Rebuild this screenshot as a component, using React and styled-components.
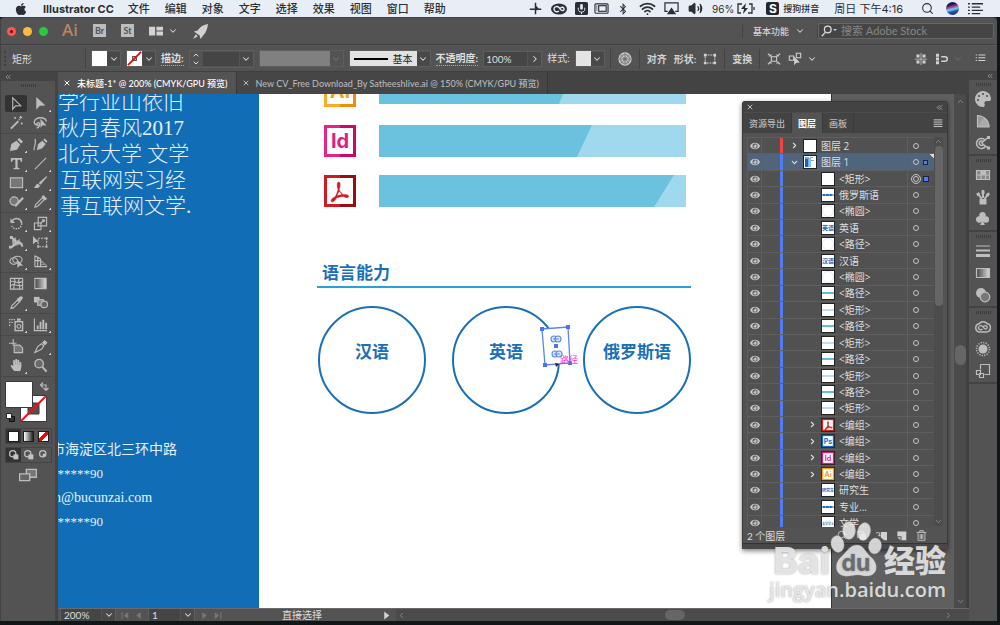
import { useState } from "react";
import styled, { createGlobalStyle } from "styled-components";
import { FaApple, FaBluetoothB, FaEye, FaHandPaper, FaPalette } from "react-icons/fa";
import { BsSuitClubFill } from "react-icons/bs";
import { Airplay, ChevronDown, ChevronRight, ChevronLeft, ChevronUp, ChevronsLeft, Search, Volume2, Wifi, X } from "lucide-react";

const colors = {
    panel: "#535353",
    dark: "#434343",
    line: "#3f3f3f",
    soft: "#5e5e5e",
    icon: "#bdbdbd",
    text: "#dedede",
    blue: "#106db6",
    select: "#4f7df5",
};

const menus = ["文件", "编辑", "对象", "文字", "选择", "效果", "视图", "窗口", "帮助"];

const layers = [
    { name: "图层 2", top: true, open: false, color: "#f24444", thumb: "blank" },
    { name: "图层 1", top: true, open: true, thumb: "page", selected: true },
    { name: "<矩形>", thumb: "blank", targeted: true },
    { name: "俄罗斯语", thumb: "word" },
    { name: "<椭圆>", thumb: "circle" },
    { name: "英语", thumb: "英语" },
    { name: "<路径>", thumb: "circle" },
    { name: "汉语", thumb: "汉语" },
    { name: "<椭圆>", thumb: "circle" },
    { name: "<路径>", thumb: "thick" },
    { name: "<矩形>", thumb: "thin" },
    { name: "<路径>", thumb: "thick" },
    { name: "<矩形>", thumb: "thin" },
    { name: "<路径>", thumb: "thick" },
    { name: "<矩形>", thumb: "thin" },
    { name: "<路径>", thumb: "thick" },
    { name: "<矩形>", thumb: "thin" },
    { name: "<编组>", thumb: "pdf", group: true },
    { name: "<编组>", thumb: "Ps", group: true },
    { name: "<编组>", thumb: "Id", group: true },
    { name: "<编组>", thumb: "Ai", group: true },
    { name: "研究生", thumb: "研究生" },
    { name: "专业...", thumb: "word" },
    { name: "文学...", thumb: "文学学士" },
];

const acrobat = "M8 2.5c1.6 0 1 3 .3 5.2 1 2 2.200 3 3.200 3.500 1.800-.2 3.500.1 3.400 1.200-.2 1.200-2.300.700-3.800-.200-1.500.200-3.200.600-4.500 1.100-1 1.700-2.400 3.200-3.300 2.700-1.200-.900.300-2.500 2.500-3.500.800-1.500 1.500-3.200 1.900-4.700C7 5.500 6.700 2.600 8 2.500z";

const Glyph = ({ size = 16, children, ...rest }) => (
    <svg width={size} height={size} viewBox="0 0 16 16" fill="none" stroke="currentColor" strokeWidth="1.2" aria-hidden="true" {...rest}>
        {children}
    </svg>
);

const solid = { fill: "currentColor", stroke: "none" };

const toolGroups = [
    [
        { label: "选择", active: true, icon: <path d="M4 2v12l3-3.500 5.500-.200z" /> },
        { label: "直接选择", more: true, icon: <path {...solid} d="M3.500 1v13.500l3.800-4.200 6-.300z" /> },
        { label: "魔棒", icon: <><path strokeWidth="2" d="M2 14.500l8-8" /><path d="M12.500 1v3M11 2.500h3M6.500 2v2M5.500 3h2M13.500 8v2M12.500 9h2M10.500 5.500l1-1" /></> },
        { label: "套索", icon: <><path strokeWidth="1.500" d="M6 11c-3.500 0-5-2-4.600-4 .5-2.800 4-4.500 7.600-4 3.500.3 5.500 2 5 4M6 11c-2 0-2.600-2-1-2.600s2.800 1 2 2.600c-.5 1.500-1.500 2.500-3 2.800" /><path {...solid} d="M8 4v9.500l2.400-2.500 4 .2z" /></> },
    ],
    [
        { label: "钢笔", more: true, icon: <path {...solid} d="M1 15l1.500-7.500L8 4l4 4-3.500 5.500zM9 3l2-2 4 4-2 2z" /> },
        { label: "曲率", icon: <><path {...solid} d="M4 14l1.500-6.500L10 4l3.500 3.500L10 12zM11 3l1.500-1.500 3 3L14 6z" /><path d="M2 2c2 4-1 8-1 12" /></> },
        { label: "文字工具", more: true, icon: <path {...solid} d="M2 2h12v4h-1.500L12 4H9.200v8.500l2 .5v1h-6.400v-1l2-.5V4H4l-.5 2H2z" /> },
        { label: "直线段", more: true, icon: <path d="M2 14L14 2" /> },
        { label: "矩形工具", more: true, icon: <rect x="1.500" y="3" width="13" height="10.500" fill="#777" /> },
        { label: "画笔", more: true, icon: <path {...solid} d="M14.500 1L6 8.500l2 2L15 2zM5.300 9.200c-2 0-2 1.800-4.300 4.300 3 1 6 .3 6.300-2.400z" /> },
        { label: "Shaper", more: true, icon: <><circle cx="5.500" cy="7.500" r="4.500" fill="#777" /><path strokeWidth="2.400" d="M6.500 13L15 4" /></> },
        { label: "铅笔", more: true, icon: <><path d="M2 14l1-3 7-7 2 2-7 7z" /><path {...solid} d="M9 3l2-2 4 4-2 2z" /></> },
    ],
    [
        { label: "旋转", more: true, icon: <><path strokeWidth="1.600" d="M3.500 5A5.500 5.500 0 0 1 13.500 8" /><path strokeWidth="1.600" strokeDasharray="1.500 1.200" d="M13.500 8A5.500 5.500 0 0 1 3 10.500" /><path {...solid} d="M1.500 2.500v5h5z" /></> },
        { label: "比例缩放", more: true, icon: <><path d="M5.500 1.500h9v9h-9zM1.500 7.500h7v7h-7z" /><path d="M8 8l4-4M9.500 4H12v2.500" /></> },
        { label: "宽度", more: true, icon: <><path strokeWidth="2.200" d="M1.500 2.500c3 0 3.500 3 6 4.500M1 13c4 0 5-4 8-5s4 1 5.500 4.500" /><path {...solid} d="M3 6l4-4 1 4 4-2-1 4 4 1-6 2-5 1z" opacity=".75" /><path {...solid} d="M1 1h3v3H1zM0 11.500h3v3H0z" /></> },
        { label: "自由变换", icon: <><path strokeDasharray="2 1" d="M5.500 3.500h9v9h-9z" /><path {...solid} d="M0 1v9l2.500-2.500H6zM13.500 2.500h2v2h-2zM13.500 11.500h2v2h-2zM4.500 11.500h2v2h-2z" /></> },
        { label: "形状生成器", more: true, icon: <><ellipse cx="5" cy="7.500" rx="4" ry="3.500" /><ellipse cx="9" cy="6" rx="5" ry="3.600" /><path {...solid} d="M9 6v9l2.300-2.400 3.700-.2z" /></> },
        { label: "透视网格", more: true, icon: <><path d="M2 1.500v12M5 3v10M8 5v8M2 2l6 3M2 7h6M2 13.500h13" /><path opacity=".6" d="M8 6.500l7 6.500M8 9h3M8 11h6" /></> },
    ],
    [
        { label: "网格", icon: <><path d="M1.500 2.500h13v11.500h-13z" /><path d="M2 6c3-2 5 3 12 0M2 10c4-3 6 2 12 0M5.500 3c3 3-2 7 0 11M11 3c-3 3 2 7 0 11" /></> },
        { label: "渐变工具", icon: <><defs><linearGradient id="toolGrad"><stop stopColor="#444" /><stop offset="1" stopColor="#ddd" /></linearGradient></defs><path fill="url(#toolGrad)" d="M2 2.500h12v11H2z" /></> },
        { label: "吸管", more: true, icon: <><path d="M2 14.500l1-3 6-6 2 2-6 6z" /><path {...solid} d="M8 4l1.500-.5L12 1.500c1.500-1 3.500 1 2.500 2.500l-2 2.500-.5 1.500z" /></> },
        { label: "混合", icon: <><path {...solid} d="M1 2h6v6H1z" /><rect x="5" y="5" width="6" height="6" fill="#888" /><circle cx="12" cy="10" r="3.500" fill="#666" /></> },
    ],
    [
        { label: "符号喷枪", more: true, icon: <><path {...solid} d="M0 2h1.500v1.500H0zM2.500 2H4v1.500H2.500zM5 2h1.500v1.500H5zM0 5h1.500v1.500H0zM2.500 5H4v1.500H2.500zM0 8h1.500v1.500H0zM8.500 1.500h4V4h-4z" /><rect x="6.500" y="5" width="8" height="9.500" strokeWidth="1.500" /><circle cx="10.500" cy="10" r="2" /></> },
        { label: "柱形图", more: true, icon: <><path d="M1.500 1.500v13H15" /><path {...solid} d="M4 9h2v4H4zM7 5h2v8H7zM10 3h2v10h-2zM13 6h2v7h-2z" /></> },
    ],
    [
        { label: "画板工具", icon: <><path d="M4.500 0v7M0 4.500h8" /><path fill="#777" d="M5.500 6.500h6l3 3v5h-9z" /></> },
        { label: "切片", more: true, icon: <><path d="M2 14.500L5 8l4-3 2.500 2.500L9 11z" /><path {...solid} d="M9.500 4l3-3 3 3-3 3z" /></> },
        { label: "抓手", more: true, icon: <FaHandPaper size="13" x="1" y="1" /> },
        { label: "缩放", icon: <><circle cx="6.500" cy="6" r="4.500" fill="#6a6a6a" strokeWidth="1.500" /><path strokeWidth="2.200" d="M10 9.500l4.500 5" /></> },
    ],
];

const dockGroups = [
    [
        { label: "颜色", icon: <FaPalette size="16" /> },
        { label: "颜色参考", icon: <><path fill="#999" d="M2.500 14V2.500C9 2.500 14 8 14 14z" /><path {...solid} d="M2.500 14L9 4l5 10z" opacity=".5" /></> },
        { label: "颜色主题", icon: <><path strokeWidth="1.500" d="M10.500 11.500a5 5 0 1 1-1-7M8.500 9.500a2.300 2.300 0 1 1-1-3.500M6.500 8l6.500-5.500M6.500 8l6.500 5" /><path {...solid} d="M12 1h3v3h-3zM12 11.500h3v3h-3z" /></> },
    ],
    [
        { label: "色板", icon: <><path fill="#888" d="M1.500 3.500h13v9h-13z" /><path d="M1.500 8h13M6 3.500v9M10.500 3.500v9" /><path {...solid} d="M6 3.500h4.500V8H6z" /></> },
        { label: "画笔面板", icon: <><path {...solid} d="M4.500 10h7v5.500h-7z" /><path strokeWidth="2" d="M6.500 10L3 4M8 9V1M9.500 10L14 4" /><path strokeWidth="3" d="M2.500 4l1.300 2.500M8 1.500V5M13.500 4.500L12 7" /></> },
        { label: "符号", icon: <BsSuitClubFill size="15" /> },
    ],
    [
        { label: "描边面板", icon: <path {...solid} d="M1 2.500h14v1H1zM1 6.500h14v2H1zM1 11h14v3H1z" /> },
        { label: "渐变", icon: <path fill="url(#toolGrad)" d="M1.500 3.500h13v9h-13z" /> },
        { label: "透明度", icon: <><circle cx="6" cy="6" r="5" {...solid} /><circle cx="10" cy="10" r="4.800" fill="#777" /></> },
    ],
    [
        { label: "库", icon: <><path strokeWidth="1.500" d="M4.500 13a4.200 4.200 0 0 1-.3-8.300A5 5 0 0 1 12 4.500 4.300 4.300 0 0 1 11.500 13z" /><path strokeWidth="1.300" d="M7.500 10c-1.500 1.500-4 .8-4-1.200s2.500-3 4-1.500L9.500 9.500c1.500 1.200 3 0 2.500-1.700s-2.800-1.500-4 .2" /></> },
        { label: "外观", icon: <><circle cx="8" cy="8" r="4.500" {...solid} /><circle cx="8" cy="8" r="6.500" strokeDasharray="1.200 1.300" strokeWidth="1.500" /></> },
        { label: "资源", icon: <><path d="M5.500 1.500h9v10h-5M5.500 1.500v5" /><path d="M1.500 7.500h4v4h-4zM4.500 10.500h4v4h-4z" /></> },
    ],
];

const Thumb = ({ kind }) => {
    const apps = { pdf: "#d22027", Ps: "#0b6fbd", Id: "#e31a82", Ai: "#f5a11c" };

    return (
        <ThumbBox viewBox="0 0 14 14" aria-hidden="true">
            <rect x=".5" y=".5" width="13" height="13" fill="#fff" stroke="#222" />
            {kind === "page" && <><path d="M2 2h4v10H2zM7 2h3v1H7zM7 5h4v1H7z" fill="#69aede" /><path d="M2 4h3v8H2z" fill="#1c64ad" /><path d="M6 3h2v9H6z" fill="#8cc4e6" /></>}
            {kind === "circle" && <circle cx="7" cy="7" r="5.500" fill="none" stroke="#c8ddef" strokeWidth=".6" />}
            {kind === "word" && <path d="M1.500 7h11" stroke="#1a70b7" strokeWidth="2" strokeDasharray="3 .4" />}
            {kind === "thick" && <path d="M1 7h12" stroke="#5fc0dc" strokeWidth="2" />}
            {kind === "thin" && <path d="M1 7h12" stroke="#a3d7ec" strokeWidth="1.500" />}
            {apps[kind] && <rect x="1.500" y="1.500" width="11" height="11" fill="#fff" stroke={apps[kind]} strokeWidth="1.300" />}
            {kind === "pdf" && <path d={acrobat} fill={apps.pdf} stroke={apps.pdf} transform="translate(2 2) scale(.62)" />}
            {["Ps", "Id", "Ai"].includes(kind) && <text x="7" y="9.800" textAnchor="middle" fontSize="7" fontWeight="700" fill={apps[kind]}>{kind}</text>}
            {["英语", "汉语"].includes(kind) && <text x="7" y="9.300" textAnchor="middle" fontSize="6" fontWeight="700" fill="#1a70b7">{kind}</text>}
            {["研究生", "文学学士"].includes(kind) && <text x="7" y="8.500" textAnchor="middle" fontSize={12 / kind.length} fontWeight="700" fill="#1a70b7">{kind}</text>}
        </ThumbBox>
    );
};

const Tool = ({ tool }) => (
    <ToolButton $active={tool.active} aria-label={tool.label}>
        <Glyph size={15}>{tool.icon}</Glyph>
        {tool.more && <Corner />}
    </ToolButton>
);

const Drop = ({ label, disabled }) => (
    <DropButton aria-label={label} disabled={disabled}><ChevronDown size={10} strokeWidth={2.5} /></DropButton>
);

const MacMenu = () => (
    <MenuBar>
        <AppleButton aria-label="Apple"><FaApple size={14} /></AppleButton>
        <MenuButton $strong>Illustrator CC</MenuButton>
        <MenuList>
            {menus.map((item) => <MenuButton key={item}>{item}</MenuButton>)}
        </MenuList>
        <MenuStatus>
            <StatusCell $w={24}><Glyph size={13} strokeWidth="1.800"><path d="M8 1v14M1 9h6M10 9h5" /><path {...solid} d="M8 4l4 4-4 3z" /></Glyph></StatusCell>
            <StatusCell $w={24}>
                <Glyph size={16}><ellipse cx="8" cy="8" rx="8" ry="5.500" {...solid} /><path stroke="#e8eef6" strokeWidth="1.400" d="M8 10c-2 1.500-5 .8-5-2s3.500-3 5-1.500l2 2.500c2 1.500 3.500 0 3-1.500s-2.500-1.500-3.500-.5" /></Glyph>
            </StatusCell>
            <StatusCell $w={20}>
                <Glyph size={13}><rect width="16" height="16" rx="2" {...solid} /><path stroke="#dfe6ee" d="M4 7v2c0 2 1.500 3.500 4 3.500s4-1.500 4-3.500V7M8 12.500V15" /><rect x="6.300" y="2.500" width="3.400" height="7" rx="1.700" fill="#dfe6ee" stroke="none" /></Glyph>
            </StatusCell>
            <StatusCell $w={20}><Glyph size={15}><rect x="1" y="3" width="14" height="10" rx="1" /><rect x="5" y="5" width="8" height="6" /><path d="M3 5v6" strokeDasharray="1 1" /></Glyph></StatusCell>
            <StatusCell $w={24}><FaBluetoothB size={12} /></StatusCell>
            <StatusCell $w={24}><Wifi size={17} strokeWidth={2.500} /></StatusCell>
            <StatusCell $w={24}>
                <Glyph size={15} strokeWidth="1.300"><path d="M4 11H1V2h14v9h-3" /><path {...solid} d="M8 7l5 7H3z" /></Glyph>
            </StatusCell>
            <StatusCell $w={24}><Volume2 size={15} strokeWidth={2} fill="currentColor" /></StatusCell>
            <Battery>
                96%
                <svg width="18" height="11" viewBox="0 0 18 11" fill="none" stroke="currentColor" aria-hidden="true">
                    <path d="M5 1H1v9h3M12 1h3v9h-4M17 4v3" strokeWidth="1.300" />
                    <path d="M9 0L4 6h3l-1 5 5-6H8z" fill="currentColor" stroke="none" />
                </svg>
            </Battery>
            <Sogou><SogouMark>S</SogouMark>搜狗拼音</Sogou>
            <Clock>周日 下午4:16</Clock>
            <StatusCell $w={24}><Search size={13} strokeWidth={2} /></StatusCell>
            <StatusCell $w={26}><Siri /></StatusCell>
            <StatusCell $w={20}><Glyph size={15} strokeWidth="1.500"><path d="M0 3h2M4 3h12M0 6.500h2M4 6.500h9M0 10h2M4 10h12M0 13.500h2M4 13.500h9" /></Glyph></StatusCell>
        </MenuStatus>
    </MenuBar>
);

const AppHeader = () => (
    <AppBar>
        <Lights>
            <Light $color="#fc5753" aria-label="关闭"><i /></Light>
            <Light $color="#fdbc40" aria-label="最小化" />
            <Light $color="#28c840" aria-label="缩放窗口" />
        </Lights>
        <Brand>Ai</Brand>
        <AppLinks>
            <SquareButton>Br</SquareButton>
            <SquareButton>St</SquareButton>
            <PlainButton aria-label="排列文档">
                <Glyph size={14} {...solid}><path d="M0 3h7v10H0zM8.500 3H16v4.300H8.500zM8.500 8.500H16V13H8.500z" /></Glyph>
                <ChevronDown size={10} strokeWidth={2.500} />
            </PlainButton>
            <PlainButton aria-label="GPU 性能"><Glyph size={15} {...solid}><path d="M16 0C10 1 7 4 5 7L1 8l3 2 1 1 2 1 1 4 3-4c3-3 4.500-7 5-12zM3 11l-3 5 5-3z" /></Glyph></PlainButton>
        </AppLinks>
        <Workspace>
            <PlainButton>基本功能 <ChevronDown size={10} strokeWidth={2.500} /></PlainButton>
        </Workspace>
        <StockSearch>
            <Glyph size={12} strokeWidth="1.700"><circle cx="9" cy="6" r="4.500" /><path d="M6 9.500L1 15" /></Glyph>
            <Caret />
            <input type="search" aria-label="搜索 Adobe Stock" placeholder="搜索 Adobe Stock" />
        </StockSearch>
    </AppBar>
);

const ControlBar = () => {
    const [opacity, setOpacity] = useState("100%");
    const [weight, setWeight] = useState("");

    return (
        <Controls>
            <ControlGroup $gap={5}>
                <ObjectName>矩形</ObjectName>
                <Divider />
                <Combo><Swatch /><Drop label="填色" /></Combo>
                <Combo>
                    <Swatch><Glyph size={15}><path stroke="#555" d="M6 6h4v4H6z" /><path stroke="#f00" strokeWidth="2" d="M1 15L15 1" /></Glyph></Swatch>
                    <Drop label="描边颜色" />
                </Combo>
                <Caption htmlFor="weight" $strong $line>描边:</Caption>
                <Combo>
                    <Stepper><ChevronUp size={8} strokeWidth={3} /><ChevronDown size={8} strokeWidth={3} /></Stepper>
                    <Field id="weight" $w={37} value={weight} onChange={(e) => setWeight(e.target.value)} />
                    <Drop label="粗细" />
                </Combo>
                <Combo><Profile /><Drop label="变量宽度" disabled /></Combo>
                <Combo><BrushBox><span />基本</BrushBox><Drop label="画笔定义" /></Combo>
                <Caption htmlFor="opacity" $strong $line>不透明度:</Caption>
                <Combo>
                    <Field id="opacity" $w={44} value={opacity} onChange={(e) => setOpacity(e.target.value)} />
                    <DropButton aria-label="不透明度滑块"><ChevronRight size={10} strokeWidth={2.500} /></DropButton>
                </Combo>
                <Caption as="span">样式:</Caption>
                <Combo><Swatch $color="#e4e4e4" /><Drop label="图形样式" /></Combo>
            </ControlGroup>
            <ControlGroup $gap={7}>
                <Divider />
                <PlainButton aria-label="重新着色">
                    <Glyph size={14}><circle cx="8" cy="8" r="7" fill="#999" /><circle cx="8" cy="8" r="3.500" /><path d="M8 1v14M1 8h14M3 3l10 10M3 13L13 3" strokeWidth=".7" stroke="#666" /></Glyph>
                </PlainButton>
                <Divider />
                <PlainButton $strong>对齐</PlainButton>
                <PlainButton $strong>形状:</PlainButton>
                <PlainButton aria-label="形状属性"><Glyph size={14}><path d="M2.500 3.500h11v9h-11z" strokeDasharray="2 1" /><path {...solid} d="M1 2h3v3H1zM12 2h3v3h-3zM1 11h3v3H1zM12 11h3v3h-3z" /></Glyph></PlainButton>
                <Divider />
                <PlainButton $strong>变换</PlainButton>
                <Divider />
                <PlainButton aria-label="隔离"><Glyph size={14}><path d="M5 5.500h6v5H5zM1 2l3 2.500M15 2l-3 2.500M1 14l3-2.500M15 14l-3-2.500" /><path {...solid} d="M2 5l3-3v3zM11 2l3 3h-3zM2 11h3v3zM11 11h3l-3 3z" /></Glyph></PlainButton>
                <PlainButton aria-label="选择类似对象">
                    <Glyph size={14}><path d="M1.500 4.500h5v5h-5zM9.500 1.500h5v5h-5z" /><path {...solid} d="M7 5v10l2.500-2.800 4-.2z" /></Glyph>
                    <ChevronDown size={10} strokeWidth={2.500} />
                </PlainButton>
            </ControlGroup>
            <ControlEnd>
                <PlainButton aria-label="对齐像素"><Glyph size={12} {...solid}><path d="M2 2h4v4H2zM10 2h4v4h-4zM2 10h4v4H2zM10 10h4v4h-4zM7.500 0h1v16h-1zM0 7.500h16v1H0z" /></Glyph></PlainButton>
                <PlainButton aria-label="停放"><Glyph size={12}><path {...solid} d="M0 1h4v4H0zM0 6h4v4H0zM0 11h4v4H0z" /><path strokeWidth="2" d="M7 5h5c4 0 4 6 0 6H7" /></Glyph><Faded><ChevronDown size={10} /></Faded></PlainButton>
                <PlainButton aria-label="面板选项"><Glyph size={11}><path d="M1 3h2M5 3h10M1 7h2M5 7h10M1 11h2M5 11h10" strokeWidth="1.500" /></Glyph></PlainButton>
            </ControlEnd>
        </Controls>
    );
};

const Toolbox = () => (
    <ToolColumn>
        <PanelTop><ChevronsLeft size={8} /></PanelTop>
        <Grip />
        <ToolGroups>
            {toolGroups.map((group, index) => (
                <ToolGroup key={index}>
                    {group.map((tool) => <Tool key={tool.label} tool={tool} />)}
                </ToolGroup>
            ))}
        </ToolGroups>
        <FillStroke width="46" height="46" viewBox="0 0 46 46" aria-label="填色和描边">
            <path d="M16.500 16.500h26v26h-26z" fill="#fff" stroke="#3a3a3a" />
            <path d="M24 24h11v11H24z" fill="#535353" stroke="#3a3a3a" />
            <path d="M17 42L42 17" stroke="#e8141c" strokeWidth="2" />
            <path d="M1.500 2.500h27v26h-27z" fill="#fff" stroke="#3a3a3a" />
            <path d="M37 6h5v5M39 3.500L36.500 6 39 8.500M39.500 9l2.500 2.500L44.500 9" fill="none" stroke="#bbb" strokeWidth="1.200" />
            <path d="M5.500 37.500h5v5h-5z" fill="#333" stroke="#111" /><path d="M2.500 34.500h5v5h-5z" fill="#fff" stroke="#222" />
        </FillStroke>
        <ModeRow>
            <ModeButton $active aria-label="颜色模式"><Chip $bg="#fff" /></ModeButton>
            <ModeButton aria-label="渐变模式"><Chip $bg="linear-gradient(90deg, #fff, #222)" /></ModeButton>
            <ModeButton aria-label="无"><Chip $bg="linear-gradient(135deg, #fff 36%, #f00 37%, #f00 63%, #fff 64%)" /></ModeButton>
        </ModeRow>
        <ModeRow>
            {["正常绘图", "背面绘图", "内部绘图"].map((label, index) => (
                <ModeButton key={label} $active={index === 0} aria-label={label}>
                    <Glyph size={10}><circle cx="6" cy="6" r="5" strokeWidth="2" /><path {...solid} d={index === 2 ? "M6 6h4v4H6z" : "M7 7h8v8H7z"} /></Glyph>
                </ModeButton>
            ))}
        </ModeRow>
        <ScreenMode aria-label="更改屏幕模式"><Glyph size={18}><path fill="#777" d="M6.500 3h9v7h-9z" /><path fill="#666" d="M.5 7h9v6h-9z" /></Glyph></ScreenMode>
    </ToolColumn>
);

const SkillIcon = ({ from, to, children }) => (
    <svg width="32" height="32" viewBox="0 0 32 32" aria-hidden="true">
        <path d="M0 0h16v32H0z" fill={from} /><path d="M16 0h16v32H16z" fill={to} />
        <path d="M3 3h26v26H3z" fill="#fff" />
        {children}
    </svg>
);

const Artwork = () => (
    <Artboard>
        <Sidebar>
            <Intro>
                <p>学行业山依旧</p>
                <p>秋月春风2017</p>
                <p>北京大学 文学</p>
                <p>互联网实习经</p>
                <p>事互联网文学.</p>
            </Intro>
            <Contact>
                <p>市海淀区北三环中路</p>
                <p>******90</p>
                <p>n@bucunzai.com</p>
                <p>******90</p>
            </Contact>
        </Sidebar>
        <Resume>
            <Skill $cut>
                <SkillIcon from="#f9ac29" to="#f08c0a"><text x="16" y="23" textAnchor="middle" fontSize="20" fontWeight="700" fill="#f5a11c">Ai</text></SkillIcon>
                <SkillBar viewBox="0 0 307 10"><path d="M0 0h307v10H0z" fill="#a0d9ee" /><path d="M0 0h184l-4 10H0z" fill="#6bc2df" /></SkillBar>
            </Skill>
            <Skill>
                <SkillIcon from="#e9228a" to="#cc0867"><text x="16" y="23" textAnchor="middle" fontSize="20" fontWeight="700" fill="#e01b84">Id</text></SkillIcon>
                <SkillBar viewBox="0 0 307 32"><path d="M0 0h307v32H0z" fill="#a0d9ee" /><path d="M0 0h213l-15 32H0z" fill="#6bc2df" /></SkillBar>
            </Skill>
            <Skill>
                <SkillIcon from="#cf1c22" to="#951015"><path d={acrobat} fill="#d31b21" stroke="#d31b21" strokeWidth=".5" transform="translate(3 3.500) scale(1.450)" /><path d="M15.200 16.500l-2 4 4.500-1.200z" fill="#fff" /></SkillIcon>
                <SkillBar viewBox="0 0 307 32"><path d="M0 0h307v32H0z" fill="#a0d9ee" /><path d="M0 0h295l-20 32H0z" fill="#6bc2df" /></SkillBar>
            </Skill>
            <SectionTitle>语言能力</SectionTitle>
            <Languages>
                <Language>汉语</Language>
                <Language>
                    英语
                    <Selection width="48" height="48" viewBox="0 0 48 48" aria-hidden="true">
                        <path d="M6 7l26-2 2 36-25 2z" fill="#fff" stroke="#5a86f2" strokeWidth="1.300" />
                        <path d="M4 5h4v4H4zM30 3h4v4h-4zM7 41h4v4H7zM32 39h4v4h-4zM18 22h4v4h-4z" fill="#4f6ff5" />
                        <g fill="#dfe8ff" stroke="#5a86f2" strokeWidth="1.100"><circle cx="18" cy="17" r="3" /><circle cx="22" cy="17" r="3" /><circle cx="19" cy="32" r="3" /><circle cx="23" cy="32" r="3" /></g>
                        <path d="M17 17h6M18 32h6" stroke="#5a86f2" />
                        <path d="M19 41l4 1-3 3z" fill="#222" />
                        <text x="24" y="41" fontSize="9" fontWeight="400" fill="#ff3ae0">路径</text>
                    </Selection>
                </Language>
                <Language>俄罗斯语</Language>
            </Languages>
        </Resume>
    </Artboard>
);

const LayersPanel = () => {
    const [selected, setSelected] = useState("图层 1");

    return (
        <Floating>
            <FloatHead><X size={8} strokeWidth={3} /><ChevronsLeft size={9} /></FloatHead>
            <PanelTabs>
                <PanelTab>资源导出</PanelTab>
                <PanelTab $active>图层</PanelTab>
                <PanelTab>画板</PanelTab>
                <PlainButton aria-label="面板菜单"><Glyph size={10} strokeWidth="1.500"><path d="M1 3h14M1 6.500h14M1 10h14M1 13.500h14" /></Glyph></PlainButton>
            </PanelTabs>
            <LayerArea>
                <LayerList>
                    {layers.map((layer, index) => (
                        <LayerRow key={index} $selected={layer.name === selected} onClick={() => layer.top && setSelected(layer.name)}>
                            <EyeButton aria-label="切换可视性"><FaEye size={10} /></EyeButton>
                            <LockCell />
                            <ColorCell $color={layer.color} />
                            <NameCell $top={layer.top}>
                                <Twist $top={layer.top}>{layer.open ? <ChevronDown size={9} strokeWidth={3} /> : (layer.top || layer.group) && <ChevronRight size={9} strokeWidth={3} />}</Twist>
                                <Thumb kind={layer.thumb} />
                                <span>{layer.name}</span>
                            </NameCell>
                            <TargetCell>
                                <Target $on={layer.targeted} />
                                {(layer.targeted || layer.selected) && <Marker $small={layer.selected} />}
                                {layer.selected && <Fold />}
                            </TargetCell>
                        </LayerRow>
                    ))}
                </LayerList>
                <ListScroll>
                    <ChevronUp size={9} />
                    <ListThumb />
                    <ChevronDown size={9} />
                </ListScroll>
            </LayerArea>
            <LayerFoot>
                <span>2 个图层</span>
                <FootIcons>
                    <PlainButton aria-label="定位对象"><Search size={10} /></PlainButton>
                    <PlainButton aria-label="剪切蒙版"><Glyph size={11}><path d="M2 2h9v9H2z" /><path d="M6 6h8v8H6z" fill="#bbb" /></Glyph></PlainButton>
                    <PlainButton aria-label="新建子图层"><Glyph size={11}><path d="M0 4h5v5M3 7l2 2 2-2" /><path {...solid} d="M7 3h9v12h-4l-5-4z" /></Glyph></PlainButton>
                    <PlainButton aria-label="新建图层"><Glyph size={11}><path {...solid} d="M2 2h13v13H8V9H2z" /><path {...solid} d="M2 10.500h4.500V15z" /></Glyph></PlainButton>
                    <PlainButton aria-label="删除"><Glyph size={11}><path d="M1 3.500h14M5.500 3V1h5v2M3 4v11h10V4M6 6v7M8 6v7M10 6v7" /></Glyph></PlainButton>
                </FootIcons>
            </LayerFoot>
        </Floating>
    );
};

const Watermark = () => (
    <Mark>
        <MarkRow>
            <MarkWord>Bai</MarkWord>
            <svg width="54" height="56" viewBox="0 0 54 56" aria-hidden="true">
                <g fill="#f2f2f2" fillOpacity=".82" stroke="#9a9a9a" strokeOpacity=".35">
                    <ellipse cx="7.500" cy="23" rx="6.500" ry="8.500" transform="rotate(-12 7.500 23)" />
                    <ellipse cx="19" cy="9.500" rx="6.500" ry="9" />
                    <ellipse cx="34" cy="10.500" rx="6.500" ry="9" transform="rotate(14 34 10.500)" />
                    <ellipse cx="45" cy="25" rx="6.500" ry="8" transform="rotate(12 45 25)" />
                    <path d="M27 24c7 0 8 7 14 12 8 7 7 18-3 19-5 .5-6-1-11-1s-8 2-13 1c-9-1.500-10-12-4-18 6-5 9-13 17-13z" />
                </g>
                <text x="26" y="50" textAnchor="middle" fontSize="23" fontWeight="700" fill="#6c6c6c">du</text>
            </svg>
            <MarkWord $cjk>经验</MarkWord>
        </MarkRow>
        <MarkUrl>jingyan.baidu.com</MarkUrl>
    </Mark>
);

const App = () => (
    <Desktop>
        <GlobalStyle />
        <MacMenu />
        <Window>
            <AppHeader />
            <ControlBar />
            <Body>
                <Toolbox />
                <Center>
                    <Tabs>
                        <Tab $active><X size={8} strokeWidth={3} />未标题-1* @ 200% (CMYK/GPU 预览)</Tab>
                        <Tab><X size={8} strokeWidth={3} />New CV_Free Download_By Satheeshlive.ai @ 150% (CMYK/GPU 预览)</Tab>
                    </Tabs>
                    <Workarea>
                        <Artwork />
                        <Pasteboard />
                        <SideScroll><ChevronUp size={9} /><SideThumb /><ChevronDown size={9} /></SideScroll>
                        <LayersPanel />
                        <Watermark />
                    </Workarea>
                    <StatusBar>
                        <Combo><StatusField $w={41} aria-label="缩放级别" defaultValue="200%" /><Drop label="缩放列表" /></Combo>
                        <Pager>
                            <button aria-label="首项"><Glyph size={9} {...solid}><path d="M1 2h2v12H1zM13 2v12L5 8z" /></Glyph></button>
                            <button aria-label="上一项"><Glyph size={9} {...solid}><path d="M12 2v12L4 8z" /></Glyph></button>
                        </Pager>
                        <Combo><StatusField $w={32} aria-label="画板导航" defaultValue="1" /><Drop label="画板列表" /></Combo>
                        <Pager>
                            <button aria-label="下一项"><Glyph size={9} {...solid}><path d="M4 2v12l8-6z" /></Glyph></button>
                            <button aria-label="末项"><Glyph size={9} {...solid}><path d="M13 2h2v12h-2zM3 2v12l8-6z" /></Glyph></button>
                        </Pager>
                        <StatusText>直接选择</StatusText>
                        <PlainButton aria-label="显示"><Glyph size={9} {...solid}><path d="M4 1v14l9-7z" /></Glyph></PlainButton>
                        <BottomScroll><ChevronLeft size={9} /><BottomThumb /><ChevronRight size={9} /></BottomScroll>
                    </StatusBar>
                </Center>
                <Dock>
                    <PanelTop $end><ChevronsLeft size={8} /></PanelTop>
                    {dockGroups.map((group, index) => (
                        <DockGroup key={index}>
                            <Grip />
                            {group.map((item) => (
                                <DockButton key={item.label} aria-label={item.label}><Glyph size={16}>{item.icon}</Glyph></DockButton>
                            ))}
                        </DockGroup>
                    ))}
                </Dock>
            </Body>
        </Window>
    </Desktop>
);

const GlobalStyle = createGlobalStyle`
    * {
        box-sizing: border-box;
    }

    body {
        margin: 0;
        font-family: Lato, "Noto Sans CJK SC", sans-serif;
        font-size: 10px;
        color: ${colors.text};
        background-color: #0f1719;
    }

    button, input {
        font: inherit;
        color: inherit;
        border: 0;
        padding: 0;
        background: none;
        outline: none;
    }

    button {
        display: flex;
        align-items: center;
        justify-content: center;
        white-space: nowrap;
    }

    p, ul, h2 {
        margin: 0;
        padding: 0;
    }

    svg {
        flex-shrink: 0;
    }
`

const Desktop = styled.div`
    display: flex;
    flex-direction: column;
    height: 100vh;
    padding-bottom: 4px;
    overflow: hidden;
`

const MenuBar = styled.nav`
    display: flex;
    align-items: center;
    flex: 0 0 17px;
    padding: 0 15px 0 14px;
    background-color: #e8eef6;
    color: #2b2e33;
    font-family: Inter, "Noto Sans CJK SC", sans-serif;
    font-size: 11px;
`

const AppleButton = styled.button`
    width: 14px;
    margin-right: 15px;
`

const MenuButton = styled.button`
    font-weight: ${({ $strong }) => ($strong ? 700 : 500)};
    line-height: 16px;
`

const MenuList = styled.div`
    display: flex;
    gap: 15px;
    margin-left: 14px;
`

const MenuStatus = styled.div`
    display: flex;
    align-items: center;
    margin-left: auto;
`

const StatusCell = styled.span`
    display: flex;
    justify-content: center;
    width: ${({ $w }) => $w}px;
`

const Battery = styled.span`
    display: flex;
    align-items: center;
    gap: 3px;
    margin: 0 11px 0 5px;
    font-size: 10px;
`

const Sogou = styled.span`
    display: flex;
    align-items: center;
    gap: 4px;
    margin-right: 15px;
    font-size: 9px;
    line-height: 16px;
    font-weight: 500;
`

const SogouMark = styled.b`
    width: 13px;
    height: 13px;
    border-radius: 2px;
    background-color: #23262b;
    color: #fff;
    font-size: 12px;
    line-height: 13px;
    text-align: center;
`

const Clock = styled.time`
    margin-right: 12px;
    font-size: 11px;
    line-height: 16px;
`

const Siri = styled.i`
    width: 13px;
    height: 13px;
    border-radius: 50%;
    background: linear-gradient(165deg, #231a4a 25%, #b44aa6 42%, #62dcea 55%, #2a50b4 70%, #1b2350);
`

const Window = styled.div`
    display: flex;
    flex-direction: column;
    flex: 1;
    min-height: 0;
    margin-right: 3px;
    border-top: 1px solid #3a4550;
    border-left: 1px solid ${colors.dark};
    border-radius: 4px 4px 0 0;
    background-color: ${colors.panel};
`

const AppBar = styled.header`
    display: flex;
    align-items: center;
    flex: 0 0 27px;
    padding: 0 3px 0 6px;
    border-bottom: 1px solid ${colors.line};
`

const Lights = styled.div`
    display: flex;
    gap: 7px;
`

const Light = styled.button`
    width: 9px;
    height: 9px;
    border-radius: 50%;
    background-color: ${({ $color }) => $color};

    i {
        width: 3px;
        height: 3px;
        border-radius: 50%;
        background-color: #5a0b08;
    }
`

const Brand = styled.strong`
    width: 31px;
    margin-left: 14px;
    padding-bottom: 3px;
    color: #c08560;
    font-family: "Noto Sans", sans-serif;
    font-size: 17px;
    font-weight: 500;
    line-height: 18px;
`

const AppLinks = styled.div`
    display: flex;
    gap: 15px;
`

const SquareButton = styled.button`
    width: 13px;
    height: 13px;
    background-color: ${colors.icon};
    color: ${colors.panel};
    font-size: 9px;
    font-weight: 700;
`

const PlainButton = styled.button`
    gap: 5px;
    color: #d2d2d2;
    font-weight: ${({ $strong }) => ($strong ? 700 : 400)};
`

const Workspace = styled.div`
    display: flex;
    margin-left: auto;
    padding: 0 12px 0 10px;
    border: solid ${colors.dark};
    border-width: 0 1px;

    button {
        gap: 6px;
        font-size: 9px;
        font-weight: 500;
    }
`

const StockSearch = styled.label`
    display: flex;
    align-items: center;
    width: 176px;
    height: 16px;
    padding-left: 2px;
    border: 1px solid #666;
    border-radius: 2px;
    background-color: #454545;

    input {
        min-width: 0;
        flex: 1;
        font-size: 11px;
        line-height: 14px;
    }

    input::placeholder {
        color: #858585;
    }
`

const Caret = styled.i`
    margin-right: 4px;
    border: 2px solid transparent;
    border-top-color: #ccc;
`

const Controls = styled.div`
    display: flex;
    align-items: center;
    flex: 0 0 27px;
    padding: 0 11px 0 3px;
    border-top: 1px solid #5b5b5b;
    border-bottom: 1px solid ${colors.line};
    white-space: nowrap;
`

const ControlGroup = styled.div`
    display: flex;
    align-items: center;
    gap: ${({ $gap }) => $gap}px;
    margin-right: 5px;
`

const ObjectName = styled.span`
    width: 76px;
    padding-left: 6px;
    border-left: 2px dotted #404040;
`

const Divider = styled.i`
    width: 1px;
    height: 20px;
    background-color: ${colors.dark};
`

const Combo = styled.div`
    display: flex;
    align-items: center;
    flex-shrink: 0;
    border: 1px solid ${colors.soft};
`

const Swatch = styled.span`
    width: 15px;
    height: 15px;
    background-color: ${({ $color }) => $color || "#fff"};
`

const DropButton = styled.button`
    width: 13px;
    height: 14px;
    background-color: #494949;

    &:disabled {
        background-color: ${colors.panel};
        color: #777;
    }
`

const Stepper = styled.span`
    display: flex;
    flex-direction: column;
    align-items: center;
    width: 13px;
`

const Field = styled.input`
    width: ${({ $w }) => $w}px;
    height: 14px;
    padding-left: 2px;
    border-right: 1px solid ${colors.panel};
    background-color: #454545;
    font-size: 10px;
`

const Caption = styled.label`
    line-height: 13px;
    font-weight: ${({ $strong }) => ($strong ? 700 : 400)};
    border-bottom: ${({ $line }) => ($line ? "1px dotted #aaa" : "0")};
`

const Profile = styled.span`
    width: 70px;
    height: 15px;
    background-color: #808080;
`

const BrushBox = styled.span`
    display: flex;
    align-items: center;
    gap: 5px;
    width: 67px;
    height: 15px;
    padding-left: 4px;
    background-color: #e2e2e2;
    color: #222;

    span {
        width: 34px;
        height: 2px;
        background-color: #000;
    }
`

const ControlEnd = styled.div`
    display: flex;
    gap: 9px;
    margin-left: auto;

    button:last-child {
        margin-left: 3px;
    }
`

const Faded = styled.i`
    display: flex;
    color: #777;
`

const Body = styled.div`
    display: flex;
    flex: 1;
    min-height: 0;
`

const ToolColumn = styled.aside`
    display: flex;
    flex-direction: column;
    flex: 0 0 57px;
    border-right: 3px solid #444;
`

const PanelTop = styled.div`
    display: flex;
    justify-content: ${({ $end }) => ($end ? "flex-end" : "flex-start")};
    align-items: center;
    flex: 0 0 9px;
    padding: 0 3px;
    background-color: #444;
    color: #aaa;
`

const Grip = styled.i`
    align-self: center;
    width: 15px;
    height: 3px;
    margin: 3px 0 2px;
    background: repeating-linear-gradient(90deg, #3c3c3c 0 1px, ${colors.panel} 1px 2px);
`

const ToolGroups = styled.div`
    padding-top: 5px;
`

const ToolGroup = styled.div`
    display: grid;
    grid-template-columns: 24px 24px;
    grid-auto-rows: 19px;
    margin: 0 3px 1px 0;
    padding: 0 0 1px 3px;
    border-bottom: 1px solid #484848;
`

const ToolButton = styled.button`
    position: relative;
    margin: 1px;
    border-radius: 2px;
    color: ${colors.icon};
    background-color: ${({ $active }) => ($active ? "#333" : "transparent")};
`

const Corner = styled.i`
    position: absolute;
    right: 0;
    bottom: 0;
    width: 3px;
    height: 3px;
    background: linear-gradient(135deg, transparent 50%, #ccc 51%);
`

const FillStroke = styled.svg`
    margin: 1px 0 0 3px;
`

const ModeRow = styled.div`
    display: flex;
    align-self: flex-start;
    margin: 3px 0 0 4px;
    border: 1px solid #444;
`

const ModeButton = styled.button`
    width: 15px;
    height: 14px;
    color: #c4c4c4;
    background-color: ${({ $active }) => ($active ? "#333" : "transparent")};
`

const Chip = styled.i`
    width: 11px;
    height: 11px;
    border: 1px solid #1c1c1c;
    background: ${({ $bg }) => $bg};
`

const ScreenMode = styled.button`
    margin-top: 3px;
    color: ${colors.icon};
`

const Center = styled.main`
    display: flex;
    flex-direction: column;
    flex: 1;
    min-width: 0;
`

const Tabs = styled.div`
    display: flex;
    flex: 0 0 22px;
    background-color: ${colors.dark};
`

const Tab = styled.button`
    gap: 6px;
    padding: 0 8px 0 5px;
    border-right: 1px solid #383838;
    font-size: 9px;
    font-weight: 500;
    background-color: ${({ $active }) => ($active ? colors.panel : "#464646")};
    color: ${({ $active }) => ($active ? "#fff" : "#b8b8b8")};
`

const Workarea = styled.div`
    position: relative;
    display: flex;
    flex: 1;
    min-height: 0;
`

const Artboard = styled.section`
    display: flex;
    flex: 1;
    min-width: 0;
    overflow: hidden;
    background-color: #fff;
`

const Sidebar = styled.div`
    flex: 0 0 201px;
    overflow: hidden;
    background-color: ${colors.blue};
    color: #e6f0fa;
    font-family: "Liberation Serif", "Noto Sans CJK SC", serif;
    white-space: nowrap;
`

const Intro = styled.div`
    margin-top: -5px;
    font-size: 21px;
    font-weight: 300;
    line-height: 26px;

    p:nth-child(n + 4) {
        padding-left: 2px;
    }
`

const Contact = styled.div`
    margin: 219px 0 0 -7px;
    font-size: 14px;
    line-height: 24px;

    p:nth-child(2n) {
        font-size: 13px;
    }

    p:nth-child(3) {
        padding-left: 3px;
    }
`

const Resume = styled.div`
    width: 432px;
    padding-left: 58px;
    font-family: Inter, "Noto Sans CJK SC", sans-serif;
    color: #1a70b8;
`

const Skill = styled.div`
    display: flex;
    align-items: ${({ $cut }) => ($cut ? "flex-end" : "center")};
    gap: 23px;
    height: ${({ $cut }) => ($cut ? "13px" : "32px")};
    margin-bottom: 18px;
    padding-left: 7px;
`

const SkillBar = styled.svg`
    width: 307px;
    align-self: flex-start;
`

const SectionTitle = styled.h2`
    margin-top: 53px;
    padding-left: 5px;
    border-bottom: 2px solid #2aa0da;
    font-size: 17px;
    font-weight: 700;
    line-height: 26px;
`

const Languages = styled.div`
    display: grid;
    grid-template-columns: 134px 131px 108px;
    margin-top: 18px;
    padding-left: 1px;
`

const Language = styled.div`
    position: relative;
    width: 108px;
    height: 108px;
    padding-top: 32px;
    border: 2px solid #1a70b8;
    border-radius: 50%;
    font-size: 17px;
    font-weight: 700;
    line-height: 24px;
    text-align: center;
`

const Selection = styled.svg`
    position: absolute;
    top: 14px;
    left: 82px;
    overflow: visible;
`

const Pasteboard = styled.div`
    flex: 0 0 123px;
    border-left: 1px solid #333;
    background-color: #5f5f5f;
`

const SideScroll = styled.div`
    display: flex;
    flex-direction: column;
    align-items: center;
    flex: 0 0 15px;
    padding: 3px 0 2px;
    border-right: 3px solid #414141;
    background-color: #4b4b4b;
    color: #999;
`

const SideThumb = styled.i`
    width: 11px;
    height: 20px;
    margin: 239px 0 auto;
    border-radius: 6px;
    background-color: #666;
`

const Floating = styled.section`
    position: absolute;
    top: 7px;
    right: 21px;
    width: 206px;
    border: 1px solid #3a3a3a;
    border-bottom: 5px solid #484848;
    border-radius: 3px 3px 0 0;
    background-color: ${colors.panel};
    box-shadow: 0 2px 5px rgba(0, 0, 0, 0.5);
`

const FloatHead = styled.div`
    display: flex;
    align-items: center;
    justify-content: space-between;
    height: 10px;
    padding: 0 3px;
    background-color: ${colors.dark};
    color: #bbb;
`

const PanelTabs = styled.div`
    display: flex;
    height: 21px;
    border-top: 1px solid #4c4c4c;
    background-color: ${colors.dark};

    > :last-child {
        margin: 0 4px 0 auto;
    }
`

const PanelTab = styled.button`
    padding: 0 6px;
    border-right: 1px solid #3a3a3a;
    font-size: 9px;
    font-weight: ${({ $active }) => ($active ? 700 : 500)};
    color: ${({ $active }) => ($active ? "#fff" : "#b8b8b8")};
    background-color: ${({ $active }) => ($active ? colors.panel : "transparent")};
`

const LayerArea = styled.div`
    display: flex;
    height: 394px;
    padding: 4px 4px 0 4px;
    overflow: hidden;
`

const LayerList = styled.ul`
    display: grid;
    grid-template-rows: repeat(24, 1fr);
    flex: 1;
    height: 394px;
    list-style: none;
`

const LayerRow = styled.li`
    display: grid;
    grid-template-columns: 15px 18px 3px 1fr 27px;
    min-height: 0;
    border-top: 1px solid ${colors.soft};
    background-color: ${({ $selected }) => ($selected ? "#50657b" : "#515151")};
`

const EyeButton = styled.button`
    border: solid ${colors.soft};
    border-width: 0 1px;
    color: #c6c6c6;
`

const LockCell = styled.i``

const ColorCell = styled.i`
    background-color: ${({ $color }) => $color || colors.select};
`

const NameCell = styled.div`
    display: flex;
    align-items: center;
    min-width: 0;
    padding-left: ${({ $top }) => ($top ? "3px" : "21px")};
    font-family: "Open Sans", "Noto Sans CJK SC", sans-serif;
    font-size: 10px;
    line-height: 14px;
    white-space: nowrap;

    span:last-child {
        margin-left: 4px;
    }
`

const Twist = styled.i`
    display: flex;
    justify-content: center;
    width: 17px;
`

const ThumbBox = styled.svg`
    width: 14px;
    height: 14px;
    font-family: Inter, "Noto Sans CJK SC", sans-serif;
`

const TargetCell = styled.div`
    position: relative;
    display: flex;
    align-items: center;
    gap: 4px;
    padding-left: 5px;
    border-left: 1px solid ${colors.soft};
`

const Target = styled.i`
    width: 6px;
    height: 6px;
    border: 1px solid #c4c4c4;
    border-radius: 50%;
    outline: ${({ $on }) => ($on ? "1px solid #c4c4c4" : "0")};
    outline-offset: 1px;
`

const Marker = styled.i`
    width: ${({ $small }) => ($small ? "5px" : "6px")};
    height: ${({ $small }) => ($small ? "5px" : "6px")};
    border: 1px solid #1d2540;
    background-color: ${colors.select};
`

const Fold = styled.i`
    position: absolute;
    top: 0;
    right: 0;
    width: 5px;
    height: 5px;
    background: linear-gradient(45deg, transparent 50%, #ddd 51%);
`

const ListScroll = styled.div`
    display: flex;
    flex-direction: column;
    align-items: center;
    width: 9px;
    height: 389px;
    background-color: #4c4c4c;
    color: #999;
`

const ListThumb = styled.i`
    width: 8px;
    height: 160px;
    margin-bottom: auto;
    border-radius: 4px;
    background-color: #656565;
`

const LayerFoot = styled.div`
    display: flex;
    align-items: center;
    justify-content: space-between;
    height: 17px;
    padding: 0 20px 0 4px;
    border-bottom: 1px solid #333;
`

const FootIcons = styled.div`
    display: flex;
    gap: 9px;
`

const Mark = styled.div`
    position: absolute;
    right: 23px;
    bottom: 5px;
    color: rgba(240, 240, 240, 0.85);
    text-shadow: 0 0 2px rgba(90, 90, 90, 0.6);
    font-family: Inter, "Noto Sans CJK SC", sans-serif;
    pointer-events: none;
`

const MarkRow = styled.div`
    display: flex;
    align-items: flex-end;
    justify-content: flex-end;
`

const MarkWord = styled.strong`
    font-size: ${({ $cjk }) => ($cjk ? "31px" : "37px")};
    font-weight: 800;
    line-height: 32px;
`

const MarkUrl = styled.div`
    font-family: "Open Sans", sans-serif;
    font-size: 20px;
    font-weight: 600;
    line-height: 26px;
    text-align: right;
`

const StatusBar = styled.footer`
    display: flex;
    align-items: center;
    flex: 0 0 13px;
    overflow: hidden;
    padding-left: 2px;
    gap: 5px;
    border-top: 1px solid #6a6a6a;
`

const StatusField = styled(Field)`
    padding-left: 3px;
`

const Pager = styled.div`
    display: flex;
    gap: 4px;
    color: #777;
`

const StatusText = styled.span`
    width: 150px;
    text-align: center;
    line-height: 12px;
`

const BottomScroll = styled.div`
    display: flex;
    align-items: center;
    justify-content: space-between;
    flex: 1;
    height: 12px;
    padding: 0 16px 0 1px;
    background-color: #4b4b4b;
    color: #999;
`

const BottomThumb = styled.i`
    width: 20px;
    height: 10px;
    border-radius: 5px;
    background-color: #666;
`

const Dock = styled.aside`
    flex: 0 0 28px;
`

const DockGroup = styled.div`
    display: flex;
    flex-direction: column;
    border-bottom: 2px solid ${colors.dark};
`

const DockButton = styled.button`
    height: 22px;
    color: ${colors.icon};
`

export default App;
